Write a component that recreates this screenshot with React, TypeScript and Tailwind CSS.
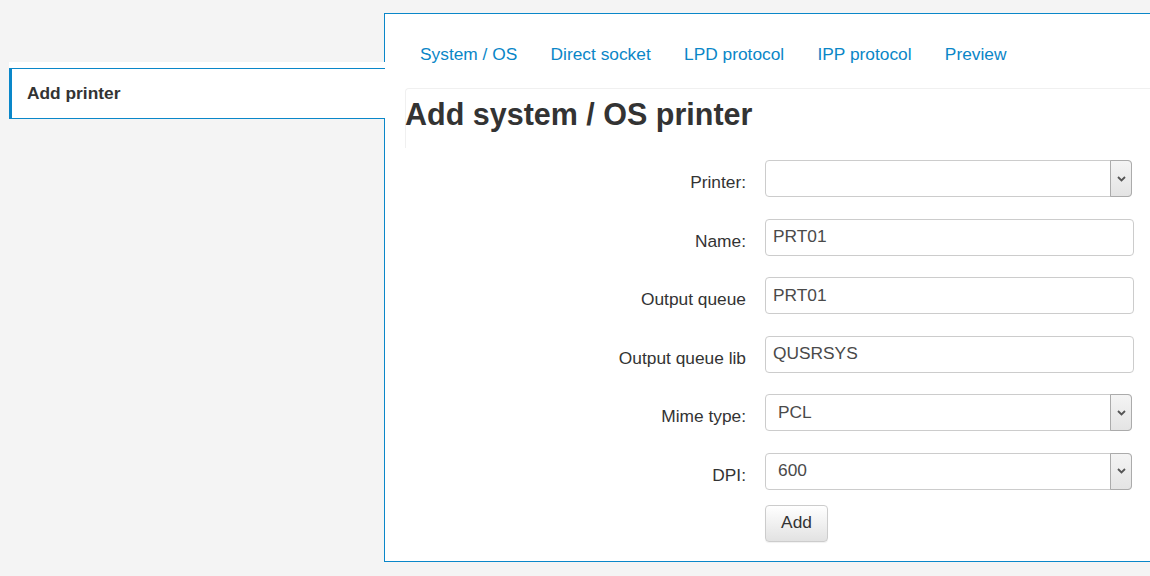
import React from "react";

const tabs = ["System / OS", "Direct socket", "LPD protocol", "IPP protocol", "Preview"];

type Field = { label: string; value: string; select?: boolean };

const fields: Field[] = [
  { label: "Printer:", value: "", select: true },
  { label: "Name:", value: "PRT01" },
  { label: "Output queue", value: "PRT01" },
  { label: "Output queue lib", value: "QUSRSYS" },
  { label: "Mime type:", value: "PCL", select: true },
  { label: "DPI:", value: "600", select: true },
];

function SelectBox({ value }: { value: string }) {
  return (
    <div className="flex h-[37px] w-[367px] rounded-[4px] border border-[#cccccc] bg-white">
      <div className="flex flex-1 items-center pl-[12px] text-[17.33px] text-[#4a4a4a]">{value}</div>
      {/* native-looking dropdown button */}
      <div className="-my-px -mr-px flex w-[22px] items-center justify-center rounded-r-[4px] border border-[#ababab] bg-gradient-to-b from-[#f4f4f4] to-[#e4e4e4]">
        <svg width="9" height="6" viewBox="0 0 9 6">
          <path d="M1 1 L4.5 4.5 L8 1" fill="none" stroke="#555555" strokeWidth="1.8" />
        </svg>
      </div>
    </div>
  );
}

function TextBox({ value }: { value: string }) {
  return (
    <div className="flex h-[37px] w-[369px] items-center rounded-[4px] border border-[#cccccc] bg-white pl-[7px] text-[17.33px] text-[#4a4a4a]">
      {value}
    </div>
  );
}

export default function App() {
  return (
    <div className="flex h-[576px] w-[1150px] overflow-hidden bg-[#f4f4f4] font-['Liberation_Sans',Arial,sans-serif] text-[#333333]">
      {/* Sidebar */}
      <div className="w-[384px] shrink-0 pl-[9px] pt-[62px]">
        <div className="relative z-10 -mr-px bg-white pt-[6px]">
          <div className="flex h-[51px] items-center border-y border-l-[3px] border-[#0a87c9] bg-white pl-[15px] text-[17.33px] font-bold">
            Add printer
          </div>
        </div>
      </div>

      {/* Main panel */}
      <div className="mt-[13px] mb-[14px] flex flex-1 flex-col border-y border-l border-[#0a87c9] bg-white pl-[20px]">
        <div className="flex h-[74px] items-start gap-[33.3px] pl-[15px] pt-[28px] text-[17.33px] leading-[24px] text-[#0a86c7]">
          {tabs.map((t) => (
            <span key={t}>{t}</span>
          ))}
        </div>

        <div className="flex-1">
          <div className="h-[60px] rounded-tl-[4px] border-l border-t border-[#f0f0f0]">
            <h1 className="-ml-px pt-[7px] text-[30.5px] font-bold leading-[36px]">Add system / OS printer</h1>
          </div>

          <div className="mt-[12px] flex flex-col gap-[21.6px]">
            {fields.map((f) => (
              <div key={f.label} className="flex gap-[19px]">
                <div className="w-[341px] pt-[12px] text-right text-[17.33px] leading-[20px]">{f.label}</div>
                {f.select ? <SelectBox value={f.value} /> : <TextBox value={f.value} />}
              </div>
            ))}
          </div>

          <div className="mt-[15px] pl-[360px]">
            <button className="h-[37px] w-[63px] rounded-[4px] border border-[#cccccc] bg-gradient-to-b from-white to-[#e2e2e2] text-[17.33px] text-[#333333] shadow-[0_1px_1px_rgba(0,0,0,0.06)]">
              Add
            </button>
          </div>
        </div>
      </div>
    </div>
  );
}
